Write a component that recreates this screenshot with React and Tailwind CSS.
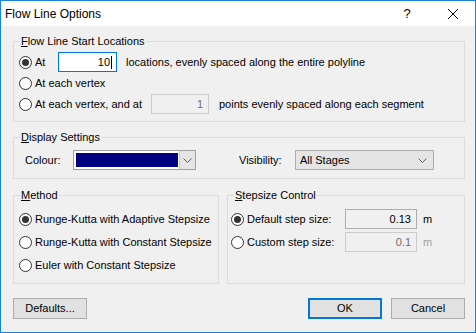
import { useState } from "react";

const Radio = ({ checked }) => (
  <span className="w-[13px] h-[13px] rounded-full border border-[#333333] bg-white flex items-center justify-center shrink-0">
    {checked && <span className="w-[7px] h-[7px] rounded-full bg-[#333333]" />}
  </span>
);

const Chevron = () => (
  <svg width="9" height="5" viewBox="0 0 9 5" className="shrink-0">
    <polyline points="0.5,0.5 4.5,4.5 8.5,0.5" fill="none" stroke="#606060" strokeWidth="1" />
  </svg>
);

// group box: padding goes on the inner div so the legend stays put
const Group = ({ title, className, bodyClass, children }) => (
  <fieldset className={`border border-[#dcdcdc] ${className}`}>
    <legend className="ml-[6px] px-[1px] leading-[14px]">
      <span className="underline">{title[0]}</span>
      {title.slice(1)}
    </legend>
    <div className={bodyClass}>{children}</div>
  </fieldset>
);

const App = () => {
  const [count, setCount] = useState("10");

  return (
    <div className="w-[476px] h-[333px] border border-[#1883d7] bg-[#f0f0f0] flex flex-col font-['Liberation_Sans',Arial,sans-serif] text-[11px] text-black whitespace-nowrap">
      {/* Title bar */}
      <div className="h-[25px] bg-white flex items-center shrink-0">
        <span className="ml-[4px] text-[12px]">Flow Line Options</span>
        <span className="ml-auto w-[46px] text-center text-[13px]">?</span>
        <span className="w-[46px] flex justify-center mr-[-1px]">
          <svg width="10" height="10" viewBox="0 0 10 10">
            <path d="M0,0 L10,10 M10,0 L0,10" stroke="#000" strokeWidth="1" />
          </svg>
        </span>
      </div>

      <div className="flex flex-col pl-[12px] pr-[10px]">
        {/* Flow Line Start Locations */}
        <Group
          title="Flow Line Start Locations"
          className="mt-[8px]"
          bodyClass="flex flex-col gap-[1px] pl-[5px] pt-[4px] pb-[7px]"
        >
          <div className="flex items-center h-[20px]">
            <div className="flex items-center w-[39px]">
              <Radio checked />
              <span className="ml-[3px]">At</span>
            </div>
            <div className="w-[59px] h-[20px] border border-[#0078d7] bg-white flex items-center justify-end pr-[4px]">
              <input
                value={count}
                onChange={(e) => setCount(e.target.value)}
                className="w-full text-right outline-none bg-transparent"
              />
              <span className="w-[1px] h-[13px] bg-black ml-[1px]" />
            </div>
            <span className="ml-[9px]">locations, evenly spaced along the entire polyline</span>
          </div>
          <div className="flex items-center h-[20px]">
            <Radio />
            <span className="ml-[3px]">At each vertex</span>
          </div>
          <div className="flex items-center h-[20px]">
            <div className="flex items-center w-[132px]">
              <Radio />
              <span className="ml-[3px]">At each vertex, and at</span>
            </div>
            <div className="w-[58px] h-[20px] border border-[#cccccc] bg-[#f0f0f0] flex items-center justify-end pr-[5px] text-[#6d6d6d]">
              1
            </div>
            <span className="ml-[10px]">points evenly spaced along each segment</span>
          </div>
        </Group>

        {/* Display Settings */}
        <Group
          title="Display Settings"
          className="mt-[8px]"
          bodyClass="flex items-center h-[34px] pl-[11px] pt-[6px] pb-[8px]"
        >
          <span className="w-[48px]">Colour:</span>
          <div className="w-[123px] h-[20px] border border-[#a0a0a0] bg-white flex p-[2px] pr-0">
            <div className="flex-1 bg-[#000080]" />
            <div className="w-[16px] -my-[2px] ml-[1px] bg-[#e5e5e5] border-l border-[#c8c8c8] flex items-center justify-center">
              <Chevron />
            </div>
          </div>
          <span className="ml-[43px] w-[56px]">Visibility:</span>
          <div className="w-[139px] h-[20px] border border-[#acacac] bg-[#e5e5e5] flex items-center pl-[4px] pr-[6px]">
            <span>All Stages</span>
            <span className="ml-auto">
              <Chevron />
            </span>
          </div>
        </Group>

        {/* Method + Stepsize */}
        <div className="flex mt-[9px] gap-[8px]">
          <Group
            title="Method"
            className="w-[206px]"
            bodyClass="flex flex-col gap-[3px] pl-[5px] pt-[7px] pb-[8px]"
          >
            {[
              ["Runge-Kutta with Adaptive Stepsize", true],
              ["Runge-Kutta with Constant Stepsize", false],
              ["Euler with Constant Stepsize", false],
            ].map(([label, on]) => (
              <div key={label} className="flex items-center h-[20px]">
                <Radio checked={on} />
                <span className="ml-[3px]">{label}</span>
              </div>
            ))}
          </Group>

          <Group
            title="Stepsize Control"
            className="flex-1"
            bodyClass="flex flex-col gap-[3px] pl-[3px] pt-[7px] pb-[8px]"
          >
            <div className="flex items-center h-[20px]">
              <div className="flex items-center w-[114px]">
                <Radio checked />
                <span className="ml-[3px]">Default step size:</span>
              </div>
              <div className="w-[72px] h-[20px] border border-[#adadad] bg-[#f0f0f0] flex items-center justify-end pr-[5px]">
                0.13
              </div>
              <span className="ml-[6px]">m</span>
            </div>
            <div className="flex items-center h-[20px]">
              <div className="flex items-center w-[114px]">
                <Radio />
                <span className="ml-[3px]">Custom step size:</span>
              </div>
              <div className="w-[72px] h-[20px] border border-[#cccccc] bg-[#f0f0f0] flex items-center justify-end pr-[5px] text-[#6d6d6d]">
                0.1
              </div>
              <span className="ml-[6px] text-[#a0a0a0]">m</span>
            </div>
          </Group>
        </div>

        {/* Buttons */}
        <div className="flex mt-[14px]">
          <button className="w-[74px] h-[21px] bg-[#e1e1e1] border border-[#adadad]">Defaults...</button>
          <button className="ml-auto w-[74px] h-[21px] bg-[#e1e1e1] border-2 border-[#0078d7]">OK</button>
          <button className="ml-[9px] w-[74px] h-[21px] bg-[#e1e1e1] border border-[#adadad]">Cancel</button>
        </div>
      </div>
    </div>
  );
};

export default App;
